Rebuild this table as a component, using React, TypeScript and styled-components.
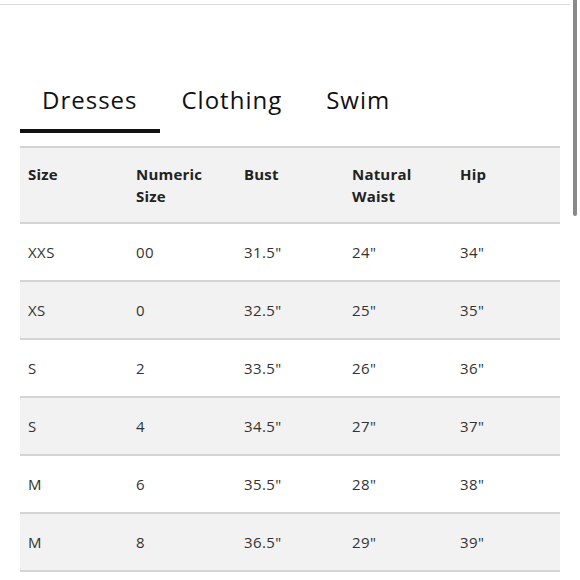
import React from "react";
import styled, { createGlobalStyle } from "styled-components";

const Global = createGlobalStyle`
  html, body { margin: 0; padding: 0; background: #fff; }
  body { font-family: "Open Sans", "Liberation Sans", sans-serif; color: #222; }
`;

const Page = styled.div`
  display: flex;
  width: 580px;
  height: 580px;
  overflow: hidden;
`;

const Content = styled.div`
  width: 570px;
  display: flex;
  flex-direction: column;
`;

const TopRule = styled.div`
  margin-top: 4px;
  height: 1px;
  background: #dcdcdc;
`;

const Scrollbar = styled.div`
  width: 10px;
  display: flex;
  justify-content: center;
`;

const Thumb = styled.div`
  width: 4px;
  height: 216px;
  background: #8a8a8a;
  border-radius: 0 0 2px 2px;
`;

const Tabs = styled.div`
  display: flex;
  margin: 77px 0 0 20px;
`;

const Tab = styled.div<{ $active?: boolean }>`
  font-size: 24px;
  font-weight: 400;
  letter-spacing: 1px;
  color: #111;
  padding: 0 22px 12px 22px;
  line-height: 35px;
  border-bottom: 4px solid ${(p) => (p.$active ? "#111" : "transparent")};
`;

const Table = styled.div`
  margin: 13px 0 0 20px;
  width: 540px;
  display: flex;
  flex-direction: column;
  border-top: 2px solid #d4d4d4;
`;

const Row = styled.div<{ $shade?: boolean; $head?: boolean }>`
  display: grid;
  grid-template-columns: repeat(5, 108px);
  background: ${(p) => (p.$shade ? "#f2f2f2" : "#fff")};
  border-bottom: 2px solid #d4d4d4;
  padding: ${(p) => (p.$head ? "15px 0" : "17px 0")};
`;

const Cell = styled.div<{ $head?: boolean }>`
  padding-left: 8px;
  font-size: 15px;
  line-height: 22px;
  letter-spacing: ${(p) => (p.$head ? "0.2px" : "0.4px")};
  font-weight: ${(p) => (p.$head ? 700 : 400)};
  color: ${(p) => (p.$head ? "#222" : "#333")};
`;

const headers = ["Size", "Numeric\nSize", "Bust", "Natural\nWaist", "Hip"];
const rows = [
  ["XXS", "00", '31.5"', '24"', '34"'],
  ["XS", "0", '32.5"', '25"', '35"'],
  ["S", "2", '33.5"', '26"', '36"'],
  ["S", "4", '34.5"', '27"', '37"'],
  ["M", "6", '35.5"', '28"', '38"'],
  ["M", "8", '36.5"', '29"', '39"'],
];

export default function App() {
  return (
    <>
      <Global />
      <Page>
        <Content>
          <TopRule />
          <Tabs>
            <Tab $active>Dresses</Tab>
            <Tab>Clothing</Tab>
            <Tab>Swim</Tab>
          </Tabs>
          <Table>
            <Row $shade $head>
              {headers.map((h) => (
                <Cell $head key={h}>
                  {h.split("\n").map((l, i) => (
                    <div key={i}>{l}</div>
                  ))}
                </Cell>
              ))}
            </Row>
            {rows.map((r, i) => (
              <Row key={i} $shade={i % 2 === 1}>
                {r.map((c, j) => (
                  <Cell key={j}>{c}</Cell>
                ))}
              </Row>
            ))}
          </Table>
        </Content>
        <Scrollbar>
          <Thumb />
        </Scrollbar>
      </Page>
    </>
  );
}
